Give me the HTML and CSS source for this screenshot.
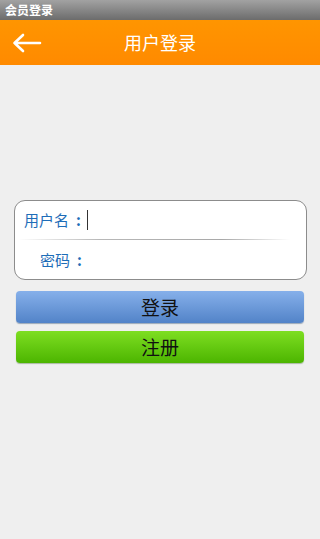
FILE: index.html
```html
<!DOCTYPE html>
<html lang="zh">
<head>
<meta charset="utf-8">
<title>会员登录</title>
<link rel="stylesheet" href="styles.css">
</head>
<body>
<div class="statusbar">会员登录</div>
<header class="topbar">
  <span class="back">
    <svg width="30" height="20" viewBox="0 0 30 20"><path d="M11 2 L2.5 10 L11 18 M2.5 10 H28" fill="none" stroke="#fff" stroke-width="2.6" stroke-linecap="round" stroke-linejoin="round"/></svg>
  </span>
  <h1 class="title">用户登录</h1>
</header>
<main class="content">
  <div class="form">
    <div class="row">
      <span class="label">用户名<span class="colon">:</span></span><span class="cursor"></span>
    </div>
    <div class="divider"></div>
    <div class="row row-pw">
      <span class="label">密码<span class="colon">:</span></span>
    </div>
  </div>
  <button class="btn btn-login">登录</button>
  <button class="btn btn-reg">注册</button>
</main>
</body>
</html>
```

FILE: styles.css
```css
html, body {
  margin: 0;
  padding: 0;
  height: 100%;
}
body {
  background: #efefef;
  font-family: "Noto Sans CJK SC", "Liberation Sans", sans-serif;
}
.statusbar {
  height: 20px;
  line-height: 19px;
  background: linear-gradient(#a2a2a2, #6c6c6c);
  color: #fff;
  font-size: 12px;
  font-weight: bold;
  padding-left: 5px;
}
.topbar {
  height: 45px;
  background: linear-gradient(#ff9500, #ff8a00);
  display: flex;
  align-items: center;
  position: relative;
}
.back {
  position: absolute;
  left: 12px;
  top: 13px;
  display: flex;
}
.title {
  margin: 0;
  width: 100%;
  text-align: center;
  color: #fff;
  font-size: 18px;
  font-weight: normal;
  line-height: 45px;
}
.content {
  padding: 135px 16px 0 14px;
  display: flex;
  flex-direction: column;
}
.form {
  height: 78px;
  background: #fff;
  border: 1px solid #8c8c8c;
  border-radius: 11px;
  margin-right: -3px;
  display: flex;
  flex-direction: column;
}
.row {
  height: 38px;
  display: flex;
  align-items: center;
  padding-left: 9px;
}
.row-pw {
  padding-left: 25px;
  height: 39px;
}
.label {
  color: #1e6db8;
  font-size: 15px;
  line-height: 20px;
  display: flex;
  align-items: center;
}
.colon {
  margin-left: 7px;
  font-weight: bold;
}
.cursor {
  width: 1px;
  height: 20px;
  background: #333;
  margin-left: 6px;
}
.divider {
  height: 1px;
  margin: 0 16px 0 3px;
  background: linear-gradient(to right, #ffffff, #b8b8b8 30%, #a8a8a8 75%, #ffffff);
}
.btn {
  margin: 0 0 0 2px;
  height: 32px;
  border: none;
  border-radius: 4px;
  font-family: "Noto Sans CJK SC", "Liberation Sans", sans-serif;
  font-size: 19px;
  color: #111;
  padding: 0;
  line-height: 32px;
}
.btn-login {
  margin-top: 11px;
  background: linear-gradient(#86b0ea, #5283c8);
  box-shadow: 0 1px 1px #9aa8b8;
}
.btn-reg {
  margin-top: 8px;
  background: linear-gradient(#7ede22, #4cb500);
  box-shadow: 0 1px 1px #a8b8a0;
}
```
